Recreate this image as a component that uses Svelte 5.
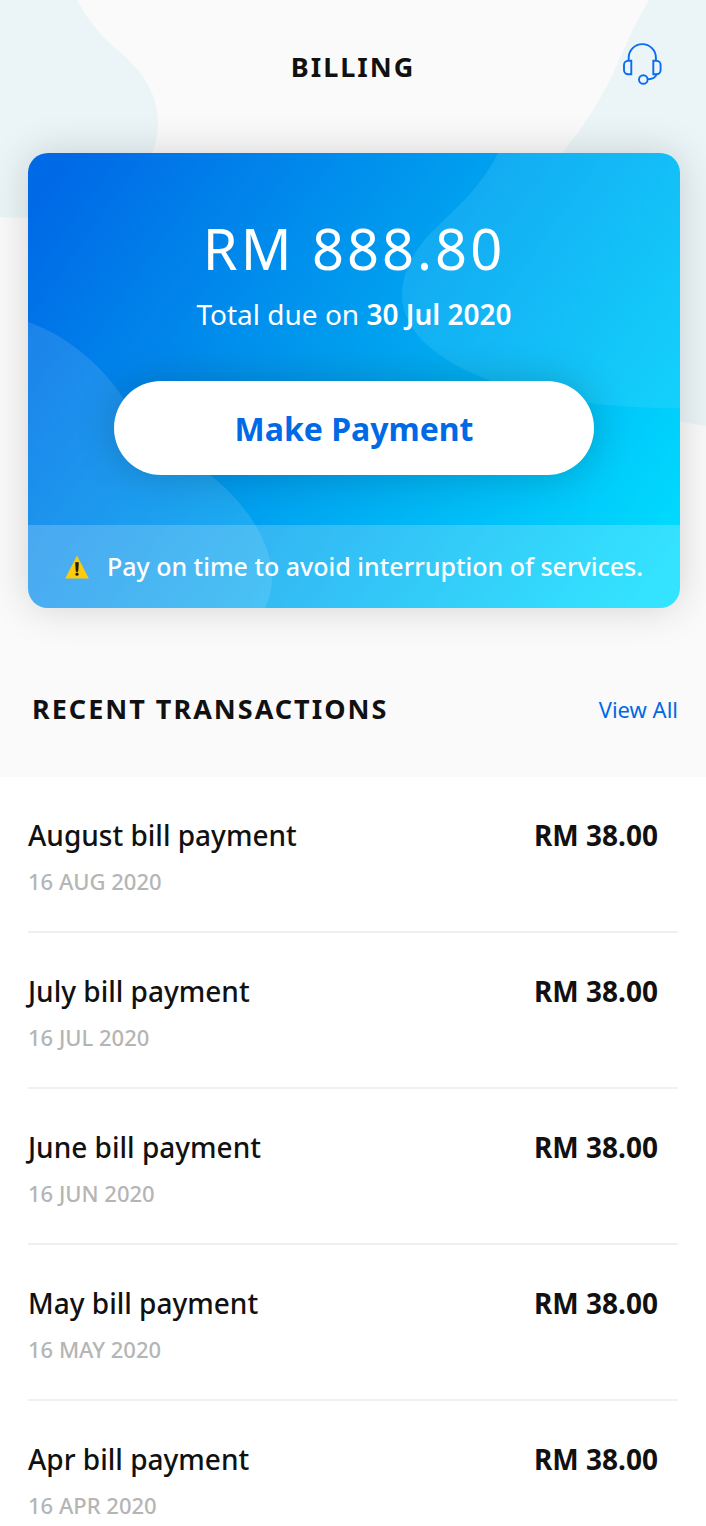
<script lang="ts">
	// Billing.svelte
	// Billing overview with the amount due and the latest transactions

	interface Transaction {
		title: string;
		date: string;
		amount: string;
	}

	const total = 'RM 888.80';
	const dueDate = '30 Jul 2020';

	const transactions: Transaction[] = [
		{ title: 'August bill payment', date: '16 AUG 2020', amount: 'RM 38.00' },
		{ title: 'July bill payment', date: '16 JUL 2020', amount: 'RM 38.00' },
		{ title: 'June bill payment', date: '16 JUN 2020', amount: 'RM 38.00' },
		{ title: 'May bill payment', date: '16 MAY 2020', amount: 'RM 38.00' },
		{ title: 'Apr bill payment', date: '16 APR 2020', amount: 'RM 38.00' }
	];
</script>

<div class="page">
	<!-- Background shapes -->
	<svg class="shape shape-left" width="160" height="220" viewBox="0 0 160 220" aria-hidden="true">
		<path d="M0 0H77C90 24 104 39 120 52C143 72 158 94 158 123C158 180 100 224 0 217Z" fill="#ebf5f8" />
	</svg>
	<svg class="shape shape-right" width="206" height="426" viewBox="0 0 206 426" aria-hidden="true">
		<path d="M149 0C118 50 118 84 63 152C20 210 -10 250 10 300C35 370 100 410 206 426V0Z" fill="#ebf5f8" />
	</svg>

	<header class="header">
		<h1>BILLING</h1>
		<button class="support" type="button" aria-label="Contact support">
			<svg width="40" height="44" viewBox="0 1 40 44" fill="none" stroke="#0a6cf0" stroke-width="1.9" aria-hidden="true">
				<path d="M6.7 18.5V15.7a13.6 13.6 0 0 1 27.2 0v2.8" />
				<path d="M9.3 18.7H6.2a4.2 4.2 0 0 0-4.2 4.2v5.1a4.2 4.2 0 0 0 4.2 4.2h3.1z" />
				<path d="M31.3 18.7h3.1a4.2 4.2 0 0 1 4.2 4.2v5.1a4.2 4.2 0 0 1-4.2 4.2h-3.1z" />
				<circle cx="21.3" cy="37.5" r="4.3" />
				<path d="M25.8 37.2c4.3 0 7.5-1.3 8.8-5" />
			</svg>
		</button>
	</header>

	<main>
		<section class="card" aria-label="Amount due">
			<svg class="shape card-left" width="244" height="286" viewBox="0 0 244 286" aria-hidden="true">
				<path d="M0 0C40 14 75 44 98 80C118 112 145 124 182 153C222 184 244 224 244 256Q244 272 237 286H0Z" fill="#fff" fill-opacity="0.11" />
			</svg>
			<svg class="shape card-right" width="278" height="256" viewBox="0 0 278 256" aria-hidden="true">
				<path d="M96 0C77 38 50 58 24 85C8 104 0 124 0 142C0 208 116 256 278 255V0Z" fill="#5fdcff" fill-opacity="0.2" />
			</svg>

			<div class="summary">
				<p class="total">{total}</p>
				<p class="due">Total due on <strong>{dueDate}</strong></p>
				<button class="pay" type="button">Make Payment</button>
			</div>

			<p class="notice">
				<svg width="24" height="24" viewBox="0 0 24 24" aria-hidden="true">
					<path d="M12 0.6L23.8 23.4H0.2Z" fill="#fdcb0b" />
					<path d="M10.5 7.5h3l-.6 9h-1.8z" fill="#1d1d1b" stroke="#1d1d1b" stroke-width="0.6" />
					<circle cx="12" cy="19.2" r="1.6" fill="#1d1d1b" />
				</svg>
				<span>Pay on time to avoid interruption of services.</span>
			</p>
		</section>

		<section>
			<div class="section-head">
				<h2>RECENT TRANSACTIONS</h2>
				<a href="#all">View All</a>
			</div>

			<ul class="list">
				{#each transactions as item}
					<li>
						<div>
							<p class="title">{item.title}</p>
							<p class="date">{item.date}</p>
						</div>
						<p class="amount">{item.amount}</p>
					</li>
				{/each}
			</ul>
		</section>
	</main>
</div>

<style>
	:global(body) {
		background: #fff;
	}

	.page {
		position: relative;
		overflow: hidden;
		background: #fafafa;
		color: #111;
		font-family: 'Noto Sans', 'Open Sans', sans-serif;
	}

	h1,
	h2,
	p,
	ul {
		margin: 0;
		padding: 0;
	}

	button {
		border: none;
		font-family: inherit;
		cursor: pointer;
	}

	.shape {
		position: absolute;
	}

	.shape-left {
		top: 0;
		left: 0;
	}

	.shape-right {
		top: 0;
		right: 0;
	}

	/* Header */
	.header {
		position: relative;
		display: grid;
		grid-template-columns: 1fr auto 1fr;
		align-items: center;
		padding: 43px 44px 62px;
	}

	h1 {
		grid-column: 2;
		font-size: 27px;
		line-height: 48px;
		font-weight: 700;
		letter-spacing: 2px;
	}

	.support {
		justify-self: end;
		align-self: start;
		display: flex;
		padding: 0;
		background: none;
	}

	/* Amount due card */
	.card {
		position: relative;
		overflow: hidden;
		margin: 0 26px 0 28px;
		border-radius: 20px;
		background: linear-gradient(125deg, #0069e6 4%, #00a2f0 50%, #00ddff 96%);
		box-shadow: 0 0 40px rgba(0, 0, 0, 0.16);
		color: #fff;
		text-align: center;
	}

	.card-left {
		left: 0;
		bottom: 0;
	}

	.card-right {
		top: 0;
		right: 0;
	}

	.summary {
		position: relative;
		padding: 55px 28px 50px;
	}

	.total {
		font-size: 56px;
		line-height: 80px;
		font-weight: 400;
		letter-spacing: 3px;
	}

	.due {
		margin: 4px 0 45px;
		font-size: 28px;
		line-height: 44px;
		font-weight: 400;
	}

	.due strong {
		font-weight: 600;
	}

	.pay {
		width: 100%;
		max-width: 480px;
		height: 94px;
		border-radius: 47px;
		background: #fff;
		box-shadow: 0 0 40px rgba(0, 0, 0, 0.2);
		color: #0069e6;
		font-size: 32px;
		font-weight: 700;
	}

	.notice {
		position: relative;
		display: flex;
		align-items: center;
		justify-content: center;
		gap: 18px;
		padding: 20px 28px;
		background: rgba(255, 255, 255, 0.2);
		font-size: 25px;
		line-height: 43px;
		font-weight: 500;
	}

	/* Transactions */
	.section-head {
		display: flex;
		align-items: center;
		justify-content: space-between;
		padding: 81px 28px 48px 32px;
	}

	h2 {
		font-size: 27px;
		line-height: 40px;
		font-weight: 700;
		letter-spacing: 2px;
	}

	.section-head a {
		color: #0069e6;
		font-size: 22px;
		text-decoration: none;
	}

	.list {
		padding: 0 28px;
		background: #fff;
		list-style: none;
	}

	.list li {
		display: flex;
		justify-content: space-between;
		padding: 38px 20px 32px 0;
		border-bottom: 2px solid #f0f0f0;
	}

	.list li:last-child {
		padding-bottom: 0;
		border-bottom: none;
	}

	.title,
	.amount {
		font-size: 28px;
		line-height: 40px;
	}

	.title {
		font-weight: 500;
	}

	.amount {
		font-weight: 700;
	}

	.date {
		margin-top: 8px;
		color: #b5b5b5;
		font-size: 22px;
		line-height: 36px;
		font-weight: 500;
	}
</style>
